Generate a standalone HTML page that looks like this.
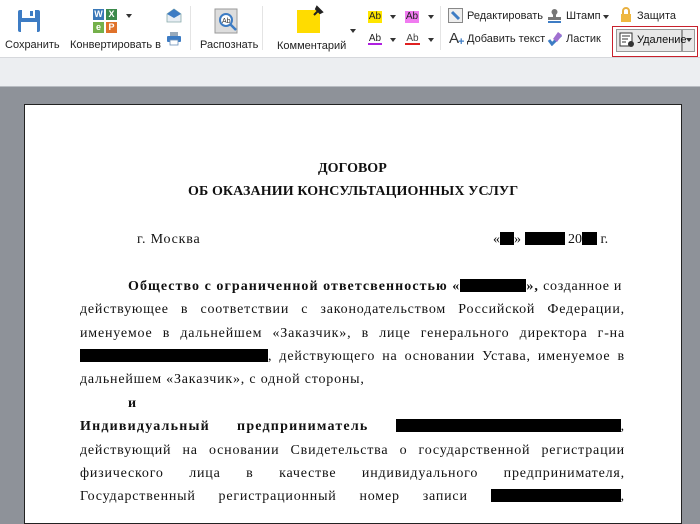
<!DOCTYPE html>
<html><head><meta charset="utf-8"><style>
*{margin:0;padding:0;box-sizing:border-box}
body{width:700px;height:514px;overflow:hidden;background:#8e9299;position:relative;font-family:"Liberation Sans",sans-serif}
.tb{position:absolute;left:0;top:0;width:700px;height:58px;background:#fff;border-bottom:1px solid #d6d8dc}
.band{position:absolute;left:0;top:58px;width:700px;height:29px;background:#eceef1;border-bottom:1px solid #b8bcc2}
.a{position:absolute}
.lbl{position:absolute;font-size:11px;color:#222;white-space:nowrap}
.sep{position:absolute;top:6px;width:1px;height:44px;background:#e4e4e4}
.arr{position:absolute;width:0;height:0;border-left:3px solid transparent;border-right:3px solid transparent;border-top:4px solid #333}
.page{position:absolute;left:24px;top:104px;width:658px;height:420px;background:#fff;border:1px solid #222}
.doc{position:absolute;font-family:"Liberation Serif",serif;font-size:14px;color:#111;white-space:nowrap;letter-spacing:.8px}
.j{position:absolute;left:80px;width:545px;display:flex;justify-content:space-between;font-family:"Liberation Serif",serif;font-size:14px;color:#111;white-space:nowrap;letter-spacing:.8px}
.r{display:inline-block;background:#000;height:13px;vertical-align:-2px}
b{font-weight:bold;letter-spacing:1.2px}
</style></head><body>
<div class="tb"></div>
<svg class="a" style="left:17px;top:9px" width="24" height="24" viewBox="0 0 24 24"><rect x="1" y="1" width="22" height="22" rx="2" fill="#3d7cc4"/><rect x="5" y="1" width="13" height="8" fill="#fff"/><rect x="13" y="2" width="3" height="5" fill="#3d7cc4"/><rect x="4" y="13" width="16" height="10" fill="#fff"/></svg>
<div class="lbl" style="left:5px;top:39px">Сохранить</div>
<div class="a" style="left:93px;top:9px;width:11px;height:11px;background:#3a78b8;color:#fff;font-size:9px;font-weight:bold;text-align:center;line-height:11px">W</div>
<div class="a" style="left:106px;top:9px;width:11px;height:11px;background:#3c8a4c;color:#fff;font-size:9px;font-weight:bold;text-align:center;line-height:11px">X</div>
<div class="a" style="left:93px;top:22px;width:11px;height:11px;background:#74b04a;color:#fff;font-size:9px;font-weight:bold;text-align:center;line-height:11px">e</div>
<div class="a" style="left:106px;top:22px;width:11px;height:11px;background:#e0722a;color:#fff;font-size:9px;font-weight:bold;text-align:center;line-height:11px">P</div>
<div class="arr" style="left:126px;top:14px"></div>
<div class="lbl" style="left:70px;top:39px">Конвертировать в</div>
<svg class="a" style="left:166px;top:8px" width="16" height="15" viewBox="0 0 16 15"><path d="M1 6 L8 1 L15 6 V14 H1Z" fill="#e8eef4" stroke="#8aa" stroke-width=".8"/><path d="M1 6 L8 1 L15 6 L8 10Z" fill="#3d7cc4"/></svg>
<svg class="a" style="left:166px;top:31px" width="16" height="15" viewBox="0 0 16 15"><rect x="4" y="1" width="8" height="4" fill="#9ab"/><rect x="1" y="5" width="14" height="6" rx="1" fill="#3d7cc4"/><rect x="4" y="9" width="8" height="5" fill="#fff" stroke="#6b8fb8" stroke-width=".8"/></svg>
<div class="sep" style="left:190px"></div>
<svg class="a" style="left:214px;top:8px" width="26" height="26" viewBox="0 0 26 26"><rect x="1" y="1" width="22" height="24" fill="#ddd" stroke="#999"/><circle cx="12" cy="12" r="6" fill="#fff" stroke="#3d7cc4" stroke-width="2"/><path d="M16 16 L22 22" stroke="#3d7cc4" stroke-width="2.5"/><text x="8" y="15" font-size="7" font-family="Liberation Sans" fill="#333">Ab</text></svg>
<div class="lbl" style="left:200px;top:39px">Распознать</div>
<div class="sep" style="left:262px"></div>
<div class="a" style="left:297px;top:10px;width:23px;height:23px;background:#ffdc00"></div>
<svg class="a" style="left:311px;top:4px" width="14" height="14" viewBox="0 0 14 14"><path d="M3 11 L7 7 M6 3 L11 8 L9 9 L5 5Z" stroke="#222" stroke-width="2" fill="#222"/></svg>
<div class="lbl" style="left:277px;top:40px">Комментарий</div>
<div class="arr" style="left:350px;top:29px"></div>
<div class="a" style="left:368px;top:11px;width:14px;height:12px;background:#ffe600;font-size:10px;line-height:12px;text-align:center;color:#222">Ab</div>
<div class="arr" style="left:390px;top:15px"></div>
<div class="a" style="left:405px;top:11px;width:14px;height:12px;background:#f07bf0;font-size:10px;line-height:12px;text-align:center;color:#222">Ab</div>
<div class="arr" style="left:428px;top:15px"></div>
<div class="a" style="left:368px;top:33px;width:14px;height:12px;font-size:10px;line-height:12px;text-align:center;color:#222;border-bottom:2px solid #b020e0">Ab</div>
<div class="arr" style="left:390px;top:38px"></div>
<div class="a" style="left:405px;top:33px;width:15px;height:12px;font-size:10px;line-height:12px;text-align:center;color:#444;border-bottom:2px solid #e02020">Ab</div>
<div class="arr" style="left:428px;top:38px"></div>
<div class="sep" style="left:440px"></div>
<svg class="a" style="left:448px;top:8px" width="15" height="15" viewBox="0 0 15 15"><rect x=".5" y=".5" width="14" height="14" fill="#eee" stroke="#888"/><path d="M4 4 L11 11" stroke="#3d7cc4" stroke-width="3"/></svg>
<div class="lbl" style="left:467px;top:10px">Редактировать</div>
<div class="a" style="left:449px;top:30px;font-size:15px;color:#333">A</div><div class="a" style="left:458px;top:36px;font-size:11px;color:#3d7cc4;font-weight:bold">+</div>
<div class="lbl" style="left:467px;top:33px">Добавить текст</div>
<svg class="a" style="left:547px;top:8px" width="15" height="15" viewBox="0 0 15 15"><circle cx="7.5" cy="4" r="3" fill="#777"/><rect x="6" y="6" width="3" height="4" fill="#777"/><rect x="1" y="9" width="13" height="3" fill="#777"/><rect x="1" y="13" width="13" height="2" fill="#3d7cc4"/></svg>
<div class="lbl" style="left:566px;top:10px">Штамп</div>
<div class="arr" style="left:603px;top:15px"></div>
<svg class="a" style="left:547px;top:30px" width="16" height="16" viewBox="0 0 16 16"><path d="M2 10 L5 14 L14 5" stroke="#3d7cc4" stroke-width="3" fill="none"/><path d="M6 9 L11 2 L15 5 L10 12Z" fill="#a070d0"/></svg>
<div class="lbl" style="left:566px;top:33px">Ластик</div>
<svg class="a" style="left:620px;top:7px" width="12" height="16" viewBox="0 0 12 16"><path d="M3 7 V4 a3 3 0 0 1 6 0 V7" stroke="#e8b040" stroke-width="2" fill="none"/><rect x="1" y="7" width="10" height="8" fill="#f0b840"/></svg>
<div class="lbl" style="left:637px;top:10px">Защита</div>
<div class="a" style="left:612px;top:26px;width:86px;height:31px;border:1.5px solid #c8202c"></div>
<div class="a" style="left:616px;top:29px;width:66px;height:23px;background:#e8e8e8;border:1px solid #999"></div>
<div class="a" style="left:682px;top:29px;width:13px;height:23px;background:#e8e8e8;border:1px solid #999"></div>
<div class="arr" style="left:686px;top:38px"></div>
<svg class="a" style="left:619px;top:32px" width="16" height="16" viewBox="0 0 16 16"><rect x="1" y="1" width="12" height="13" fill="#fff" stroke="#333"/><path d="M3 4h8M3 7h6M3 10h4" stroke="#333"/><circle cx="12" cy="12" r="3" fill="#333"/></svg>
<div class="lbl" style="left:637px;top:34px;color:#111">Удаление</div>
<div class="band"></div>
<div class="page"></div>
<div class="doc" style="left:318px;top:161px;font-weight:bold;letter-spacing:0">ДОГОВОР</div>
<div class="doc" style="left:188px;top:184px;font-weight:bold;letter-spacing:.1px">ОБ ОКАЗАНИИ КОНСУЛЬТАЦИОННЫХ УСЛУГ</div>
<div class="doc" style="left:137px;top:232px">г. Москва</div>
<div class="doc" style="left:493px;top:232px;letter-spacing:0">«<span class="r" style="width:14px"></span>» <span class="r" style="width:40px"></span> 20<span class="r" style="width:15px"></span> г.</div>
<div class="doc" style="left:128px;top:279px;letter-spacing:.7px"><b style="letter-spacing:1.05px">Общество с ограниченной ответсвенностью «<span class="r" style="width:66px"></span>»,</b> созданное и</div>
<div class="j" style="top:302px"><span>действующее</span><span>в</span><span>соответствии</span><span>с</span><span>законодательством</span><span>Российской</span><span>Федерации,</span></div>
<div class="j" style="top:326px"><span>именуемое</span><span>в</span><span>дальнейшем</span><span>«Заказчик»,</span><span>в</span><span>лице</span><span>генерального</span><span>директора</span><span>г-на</span></div>
<div class="j" style="top:349px"><span><span class="r" style="width:188px"></span>,</span><span>действующего</span><span>на</span><span>основании</span><span>Устава,</span><span>именуемое</span><span>в</span></div>
<div class="doc" style="left:80px;top:372px">дальнейшем «Заказчик», с одной стороны,</div>
<div class="doc" style="left:128px;top:396px;font-weight:bold">и</div>
<div class="j" style="top:419px"><b>Индивидуальный</b><b>предприниматель</b><span><span class="r" style="width:225px"></span>,</span></div>
<div class="j" style="top:443px"><span>действующий</span><span>на</span><span>основании</span><span>Свидетельства</span><span>о</span><span>государственной</span><span>регистрации</span></div>
<div class="j" style="top:466px"><span>физического</span><span>лица</span><span>в</span><span>качестве</span><span>индивидуального</span><span>предпринимателя,</span></div>
<div class="j" style="top:489px"><span>Государственный</span><span>регистрационный</span><span>номер</span><span>записи</span><span><span class="r" style="width:130px"></span>,</span></div>
</body></html>
